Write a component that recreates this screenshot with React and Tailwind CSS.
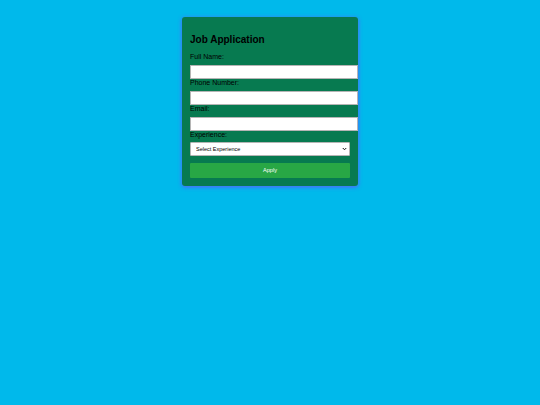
import React from "react";

const fields = [
  { label: "Full Name:", type: "text" },
  { label: "Phone Number:", type: "tel" },
  { label: "Email:", type: "email" },
];

const Field = ({ label, type }) => (
  <div className="flex flex-col">
    <label className="text-[7px] leading-[8px] text-black mb-[4px]">{label}</label>
    <input
      type={type}
      className="block h-[14px] w-[168px] bg-white border border-[#b5b5b5] outline-none"
    />
  </div>
);

export default function App() {
  return (
    <div
      className="min-h-[405px] w-full bg-[#00b9eb] flex justify-center items-start"
      style={{ fontFamily: '"Liberation Sans", Arial, sans-serif' }}
    >
      <div className="mt-[17px] w-[176px] bg-[#077a50] rounded-[3px] px-[8px] pt-[8px] pb-[8px] shadow-[0_1px_4px_rgba(110,70,255,0.85)]">
        {/* Title */}
        <h2 className="mt-[9px] mb-[7px] text-[10px] leading-[12px] font-bold text-black">
          Job Application
        </h2>

        {/* Inputs */}
        <div className="flex flex-col">
          {fields.map((f) => (
            <Field key={f.label} label={f.label} type={f.type} />
          ))}
        </div>

        {/* Experience select */}
        <div className="flex flex-col">
          <label className="text-[7px] leading-[8px] text-black mb-[3px]">Experience:</label>
          <div className="relative w-[160px] h-[14px]">
            <select className="block appearance-none w-[160px] h-[14px] p-0 bg-white border border-[#b5b5b5] rounded-[1px] pl-[5px] text-[5.5px] leading-[12px] text-black outline-none">
              <option>Select Experience</option>
              <option>0-1 Years</option>
              <option>1-3 Years</option>
              <option>3-5 Years</option>
              <option>5+ Years</option>
            </select>
            <svg
              className="absolute right-[3px] top-[5px] pointer-events-none"
              width="5"
              height="4"
              viewBox="0 0 10 8"
            >
              <path d="M1.5 2 L5 5.5 L8.5 2" fill="none" stroke="#111" strokeWidth="2" />
            </svg>
          </div>
        </div>

        {/* Apply button */}
        <button className="block mt-[7px] w-[160px] h-[15px] bg-[#28a745] rounded-[1px] text-white text-[5.6px] leading-[15px] text-center">
          Apply
        </button>
      </div>
    </div>
  );
}
